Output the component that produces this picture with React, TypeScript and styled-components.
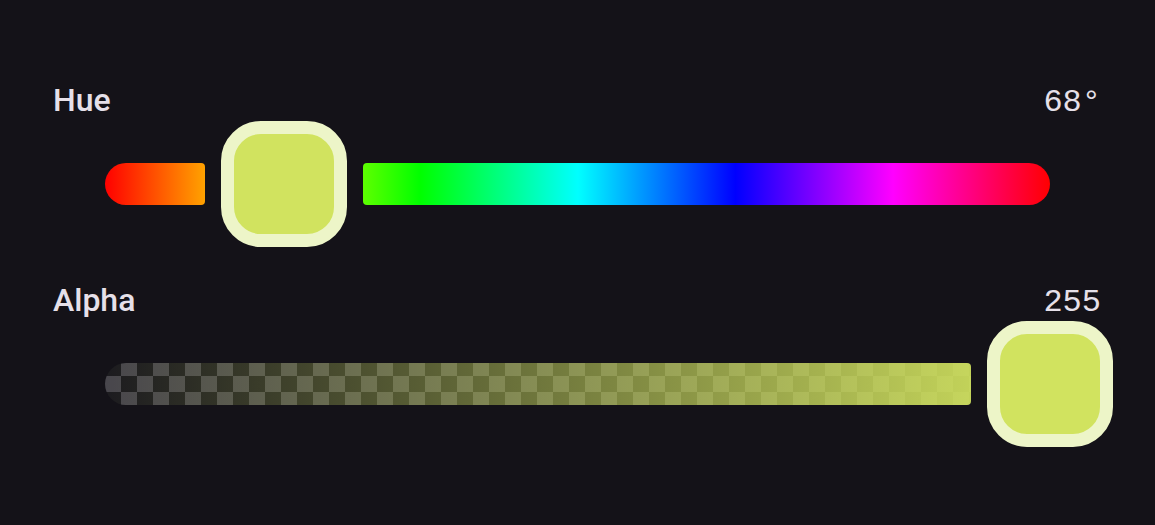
import styled, { createGlobalStyle } from "styled-components"

const TRACK_WIDTH = 945
const THUMB_SIZE = 126
const THUMB_GAP = 16

const GlobalStyle = createGlobalStyle`
  html, body {
    margin: 0;
    background: #141218;
  }
  body {
    font-family: Roboto, "Noto Sans", sans-serif;
  }
`

const Panel = styled.div`
  display: flex;
  flex-direction: column;
  gap: 33px;
  padding: 80px 0 0 53px;
  width: 1048px;
`

const Row = styled.div`
  display: flex;
  flex-direction: column;
`

const Header = styled.div`
  display: flex;
  justify-content: space-between;
  align-items: baseline;
  height: 40px;
`

const Label = styled.span`
  font-family: Roboto, sans-serif;
  font-weight: 500;
  font-size: 32px;
  line-height: 40px;
  color: #e6e0e9;
`

const Value = styled.span`
  font-family: "Liberation Mono", monospace;
  font-size: 32px;
  line-height: 40px;
  color: #e6e0e9;
`

const SliderArea = styled.div`
  display: flex;
  align-items: center;
  height: ${THUMB_SIZE}px;
  width: ${TRACK_WIDTH}px;
  margin: 1px 0 0 52px;
`

const Segment = styled.div<{ $side: "start" | "end"; $kind: "hue" | "alpha"; $color: string }>`
  flex: none;
  height: 42px;
  border-radius: ${(p) => (p.$side === "start" ? "21px 4px 4px 21px" : "4px 21px 21px 4px")};
  background-repeat: no-repeat, repeat;
  ${(p) =>
    p.$kind === "hue"
      ? `
    background-image: linear-gradient(to right, #f00, #ff0, #0f0, #0ff, #00f, #f0f, #f00);
    background-size: ${TRACK_WIDTH}px 100%;
  `
      : `
    background-image:
      linear-gradient(to right, transparent, ${p.$color}),
      conic-gradient(#48464c 0 25%, #1c1b1f 0 50%, #48464c 0 75%, #1c1b1f 0);
    background-size: ${TRACK_WIDTH}px 100%, 32px 32px;
  `}
`

const Thumb = styled.div<{ $color: string }>`
  flex: none;
  box-sizing: border-box;
  width: ${THUMB_SIZE}px;
  height: ${THUMB_SIZE}px;
  margin: 0 ${THUMB_GAP}px;
  border: 13px solid #edf5c8;
  border-radius: 40px;
  background: ${(p) => p.$color};
`

type SliderProps = {
  label: string
  display: string
  kind: "hue" | "alpha"
  fraction: number
  color: string
}

const ColorSlider = ({ label, display, kind, fraction, color }: SliderProps) => {
  // split the track around the thumb; both halves share one gradient
  const center = TRACK_WIDTH * fraction
  const startWidth = Math.max(0, center - THUMB_SIZE / 2 - THUMB_GAP)
  const endOffset = center + THUMB_SIZE / 2 + THUMB_GAP
  const endWidth = Math.max(0, TRACK_WIDTH - endOffset)
  const checkerY = "-3px"

  return (
    <Row>
      <Header>
        <Label>{label}</Label>
        <Value>{display}</Value>
      </Header>
      <SliderArea>
        {startWidth > 0 && (
          <Segment
            $side="start"
            $kind={kind}
            $color={color}
            style={{
              width: startWidth,
              backgroundPosition: kind === "hue" ? "0 0" : `0 0, 0 ${checkerY}`,
            }}
          />
        )}
        <Thumb $color={color} />
        {endWidth > 0 && (
          <Segment
            $side="end"
            $kind={kind}
            $color={color}
            style={{
              width: endWidth,
              backgroundPosition:
                kind === "hue" ? `${-endOffset}px 0` : `${-endOffset}px 0, ${-endOffset}px ${checkerY}`,
            }}
          />
        )}
      </SliderArea>
    </Row>
  )
}

const App = () => {
  const hue = 68
  const alpha = 255
  const swatch = `hsl(${hue}, 70%, 63%)`

  return (
    <>
      <GlobalStyle />
      <Panel>
        <ColorSlider label="Hue" display={`${hue}°`} kind="hue" fraction={hue / 360} color={swatch} />
        <ColorSlider label="Alpha" display={`${alpha}`} kind="alpha" fraction={alpha / 255} color={swatch} />
      </Panel>
    </>
  )
}

export default App
